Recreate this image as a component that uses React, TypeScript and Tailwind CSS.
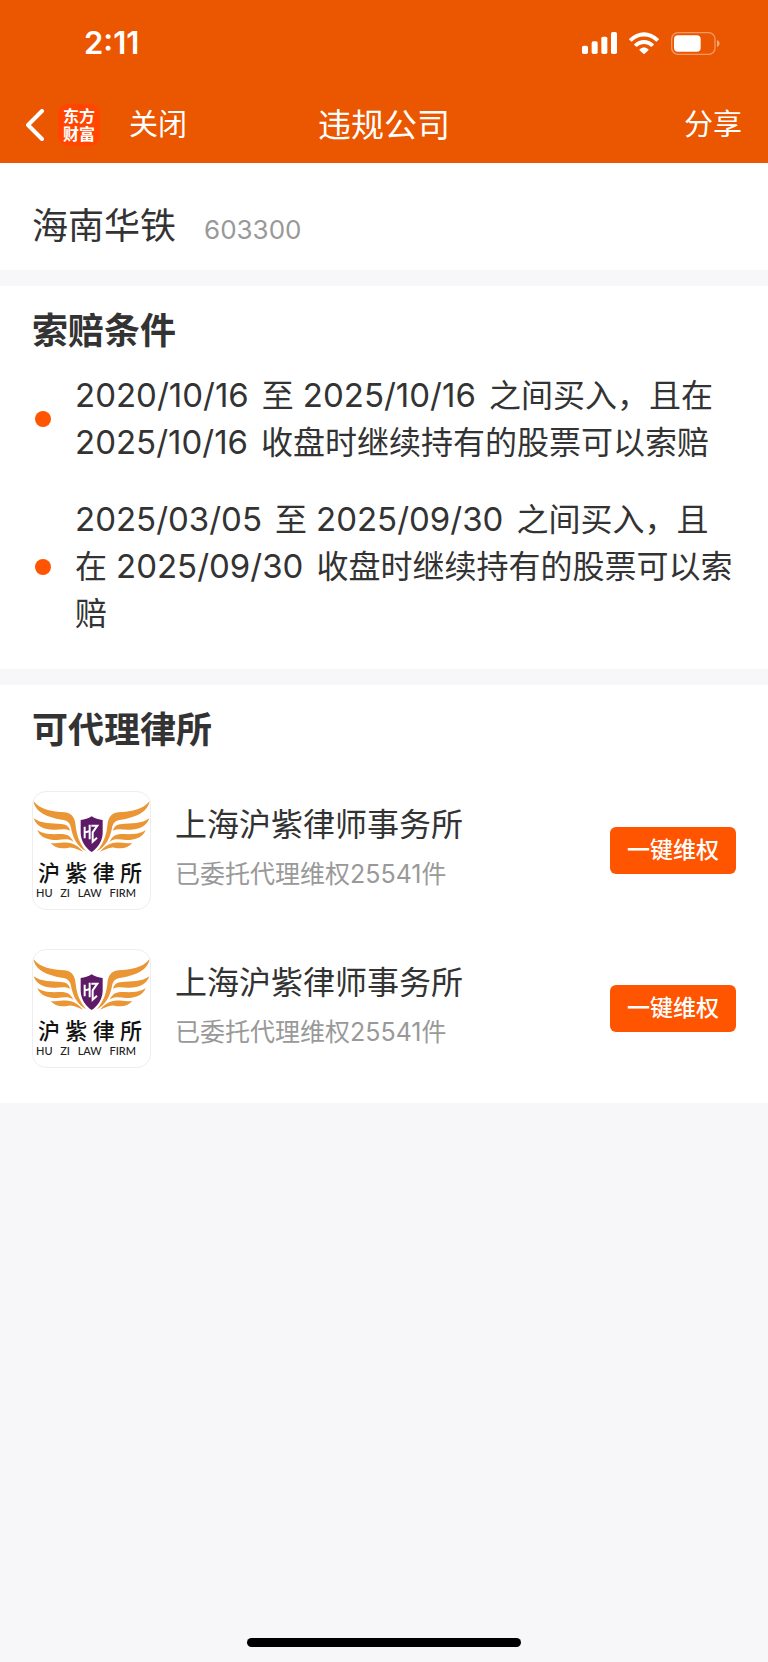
import { Fragment } from "react"

const company = { name: "海南华铁", code: "603300" }

const conditions = [
  { id: 1, from: "2020/10/16", to: "2025/10/16" },
  { id: 2, from: "2025/03/05", to: "2025/09/30" },
]

const lawFirms = [
  { id: 1, name: "上海沪紫律师事务所", cases: 25541 },
  { id: 2, name: "上海沪紫律师事务所", cases: 25541 },
]

function SignalIcon() {
  return (
    <svg viewBox="0 0 105 66" className="w-[35px] h-[22px]" fill="currentColor" aria-hidden="true">
      <rect x="0" y="41" width="18" height="25" rx="5" />
      <rect x="29" y="28" width="18" height="38" rx="5" />
      <rect x="58" y="14" width="18" height="52" rx="5" />
      <rect x="87" y="0" width="18" height="66" rx="5" />
    </svg>
  )
}

function WifiIcon() {
  return (
    <svg viewBox="0 0 90 66" className="w-[30px] h-[22px]" fill="currentColor" aria-hidden="true">
      <path d="M1 20C26-6 64-6 89 20C91 22 90 23 82 29C61 8 29 8 8 29C0 23-1 22 1 20Z" />
      <path d="M16 36C33 20 57 20 74 36C76 38 75 39 67 45C54 33 36 33 23 45C15 39 14 38 16 36Z" />
      <path d="M32 52C40 45 50 45 58 52C60 54 59 55 47 65Q45 67 43 65C31 55 30 54 32 52Z" />
    </svg>
  )
}

function BatteryIcon() {
  return (
    <svg viewBox="0 0 147 69" className="w-[49px] h-[23px]" fill="currentColor" aria-hidden="true">
      <rect x="2" y="2" width="130" height="65" rx="19" fill="none" stroke="currentColor" strokeWidth="4" opacity="0.4" />
      <rect x="9" y="10" width="80" height="49" rx="12" />
      <path d="M138 24C148 28 148 41 138 45Z" opacity="0.5" />
    </svg>
  )
}

function Wing() {
  return (
    <g fill="#ea9635">
      <path d="M1 27C22 54 58 58 95 61C119 64 126 80 128 101C131 131 141 157 160 178C133 165 119 137 114 108C111 91 102 84 86 83C43 76 7 61 1 27Z" />
      <path d="M2 79C24 96 58 94 84 96C99 97 108 103 111 116C98 109 83 112 67 113C36 114 11 106 2 79Z" />
      <path d="M13 114C36 130 63 126 88 126C105 127 114 134 121 149C108 139 92 142 72 144C43 144 22 137 13 114Z" />
      <path d="M53 153C76 157 94 148 114 154C128 158 141 168 150 179C134 173 123 165 107 167C83 171 65 168 53 153Z" />
    </g>
  )
}

function FirmLogo() {
  return (
    <div className="flex size-[119px] shrink-0 flex-col overflow-hidden rounded-[14px] border border-[#eeeeee] bg-white">
      <svg viewBox="0 0 351 183" className="w-full" aria-hidden="true">
        <Wing />
        <g transform="translate(351 0) scale(-1 1)">
          <Wing />
        </g>
        <path d="M176 73C186 80 197 83 209 84V123C208 149 194 168 176 180C158 168 144 149 143 123V84C155 83 166 80 176 73Z" fill="#5e1a66" />
        {/* HZ monogram */}
        <path
          d="M155 104V139M170 98V142M155 122L170 117M175 101H193L179 121V149L192 137"
          fill="none"
          stroke="#ffffff"
          strokeWidth="6"
        />
      </svg>
      <div className="mt-2 flex justify-between pr-2 pl-[5px] text-[22px] leading-6 font-medium text-[#111111]">
        {"沪紫律所".split("").map(char => (
          <span key={char}>{char}</span>
        ))}
      </div>
      <div className="flex justify-between pr-[14px] pl-[3px] font-['Lato','Noto_Sans_CJK_SC',sans-serif] text-[11px] leading-4 font-medium text-[#222222]">
        {["HU", "ZI", "LAW", "FIRM"].map(word => (
          <span key={word}>{word}</span>
        ))}
      </div>
    </div>
  )
}

function Header() {
  const appName = ["东方", "财富"]

  return (
    <header className="bg-[#eb5600] text-white">
      <div className="flex h-[86px] items-center justify-between pr-12 pl-[84px]">
        <span className="text-[31px] leading-9 font-semibold">2:11</span>
        <div className="flex items-center gap-3">
          <SignalIcon />
          <WifiIcon />
          <BatteryIcon />
        </div>
      </div>

      <nav className="grid h-[77px] grid-cols-[1fr_auto_1fr] items-center px-[26px]">
        <div className="flex items-center">
          <button type="button" aria-label="返回" className="flex items-center gap-[14px]">
            <svg viewBox="0 0 18 32" className="h-8 w-[18px]" fill="none" stroke="currentColor" strokeWidth="4" aria-hidden="true">
              <path d="M16 2L2 16L16 30" strokeLinecap="round" strokeLinejoin="round" />
            </svg>
            <span className="flex size-[42px] items-center justify-center rounded-[10px] bg-[#ff4500] text-[16px] leading-[18px] font-bold">
              <span>
                {appName.map((line, i) => (
                  <Fragment key={line}>
                    {i > 0 && <br />}
                    {line}
                  </Fragment>
                ))}
              </span>
            </span>
          </button>
          <button type="button" className="ml-[29px] text-[29px] leading-10">
            关闭
          </button>
        </div>
        <h1 className="text-[33px] leading-10 font-normal">违规公司</h1>
        <button type="button" className="justify-self-end text-[29px] leading-10">
          分享
        </button>
      </nav>
    </header>
  )
}

function DateText({ value }: { value: string }) {
  return (
    <time dateTime={value.replaceAll("/", "-")} className="mr-1 text-[33px]">
      {value}
    </time>
  )
}

export default function App() {
  return (
    <div className="flex min-h-screen flex-col bg-[#f7f7fa] font-['Inter','Noto_Sans_CJK_SC',sans-serif] text-[#333333]" lang="zh-CN">
      <Header />

      <main className="flex flex-col gap-4">
        <section className="flex items-baseline gap-7 bg-white px-8 pt-[37px] pb-[18px]">
          <h2 className="text-[36px] leading-[52px] font-normal">{company.name}</h2>
          <span className="text-[26px] leading-10 text-[#999999]">{company.code}</span>
        </section>

        <section className="bg-white px-8 pt-[19px] pb-8">
          <h2 className="text-[36px] leading-[52px] font-bold">索赔条件</h2>
          <ul className="mt-[15px] flex flex-col gap-[30px]">
            {conditions.map(({ id, from, to }) => (
              <li key={id} className="flex items-center gap-6 pl-[3px] text-[32px] leading-[47px]">
                <span className="size-4 shrink-0 rounded-full bg-[#ff5500]" />
                <p>
                  <DateText value={from} /> 至 <DateText value={to} /> 之间买入，且在{" "}
                  <DateText value={to} /> 收盘时继续持有的股票可以索赔
                </p>
              </li>
            ))}
          </ul>
        </section>

        <section className="bg-white px-8 pt-[19px] pb-[35px]">
          <h2 className="text-[36px] leading-[52px] font-bold">可代理律所</h2>
          <ul className="mt-[35px] flex flex-col gap-[39px]">
            {lawFirms.map(firm => (
              <li key={firm.id} className="flex items-center">
                <FirmLogo />
                <div className="ml-6 flex-1 pb-1.5">
                  <h3 className="text-[32px] leading-[52px] font-normal">{firm.name}</h3>
                  <p className="text-[25px] leading-[46px] text-[#999999]">
                    已委托代理维权{firm.cases}件
                  </p>
                </div>
                <button type="button" className="h-[47px] w-[126px] rounded-md bg-[#ff5500] text-[23px] font-medium text-white">
                  一键维权
                </button>
              </li>
            ))}
          </ul>
        </section>
      </main>

      {/* Home indicator */}
      <div className="mt-auto flex justify-center pt-8 pb-[15px]">
        <div className="h-[9px] w-[274px] rounded-full bg-black" />
      </div>
    </div>
  )
}
